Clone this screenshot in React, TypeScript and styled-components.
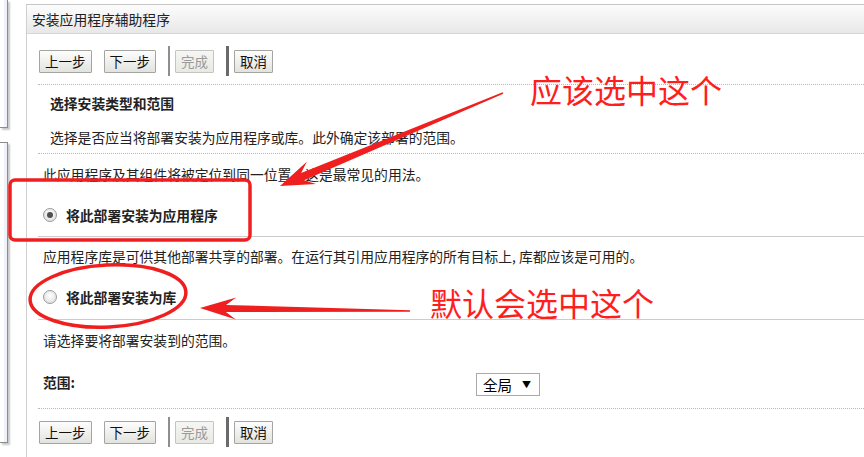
import React from 'react';
import styled, { createGlobalStyle } from 'styled-components';

const GlobalStyle = createGlobalStyle`
  html, body {
    margin: 0;
    padding: 0;
    background: #fff;
  }
  body {
    font-family: "Noto Sans CJK SC", "Noto Sans", sans-serif;
    font-size: 13.8px;
    color: #222;
    overflow: hidden;
  }
`;

const Page = styled.div`
  position: relative;
  width: 864px;
  height: 457px;
  display: flex;
  overflow: hidden;
`;

const Sidebar = styled.div`
  width: 26px;
  flex: none;
  display: flex;
  flex-direction: column;
  gap: 14px;
`;

const SidePanel = styled.div<{ $h: number; $first?: boolean }>`
  width: 7px;
  height: ${(p) => p.$h}px;
  background: #fff;
  border: 1px solid #8c8c8c;
  border-left: none;
  border-top: ${(p) => (p.$first ? 'none' : '1px solid #8c8c8c')};
  box-shadow: 2px 2px 2px rgba(0, 0, 0, 0.22), inset -3px 0 0 #eef2f8;
`;

const Main = styled.div`
  flex: 1;
  min-width: 0;
  margin-top: 4px;
  border-top: 1px solid #c6c6c6;
  border-left: 1px solid #cfcfcf;
`;

const Header = styled.div`
  height: 28px;
  display: flex;
  align-items: center;
  padding-left: 5px;
  background: linear-gradient(#fcfcfc, #e8e8e8);
  border-bottom: 1px solid #d6d6d6;
  color: #222;
`;

const Body = styled.div`
  padding-left: 11px;
`;

const Toolbar = styled.div<{ $top: number; $bottom: number }>`
  display: flex;
  align-items: center;
  gap: 12px;
  height: 30px;
  padding: ${(p) => p.$top}px 0 ${(p) => p.$bottom}px 1px;
`;

const Button = styled.button`
  height: 23px;
  padding: 0 5px;
  font-family: inherit;
  font-size: 13.5px;
  color: #111;
  background: linear-gradient(#fdfdfd, #e2e2de);
  border: 1px solid #a4a4a0;
  border-radius: 1px;
  line-height: 21px;
  &:disabled {
    color: #9a9a9a;
    border-color: #c4c4c0;
    background: linear-gradient(#f6f6f4, #e8e8e4);
  }
`;

const Separator = styled.div<{ $w: number; $c: string }>`
  width: ${(p) => p.$w}px;
  height: 30px;
  background: ${(p) => p.$c};
  margin-right: -7px;
`;

const Rule = styled.div<{ $dotted?: boolean }>`
  border-top: 1px ${(p) => (p.$dotted ? 'dotted #b8b8b8' : 'solid #cccccc')};
`;

const Row = styled.div<{ $h: number; $indent: number; $bold?: boolean }>`
  height: ${(p) => p.$h}px;
  display: flex;
  align-items: center;
  padding-left: ${(p) => p.$indent}px;
  font-weight: ${(p) => (p.$bold ? 700 : 400)};
  white-space: nowrap;
`;

const Radio = styled.span<{ $checked?: boolean }>`
  width: 12px;
  height: 12px;
  border-radius: 50%;
  border: 1px solid #9c9c9c;
  background: radial-gradient(circle at 50% 40%, #ffffff, #d8d8d8);
  display: flex;
  align-items: center;
  justify-content: center;
  margin-right: 9px;
  &::after {
    content: '';
    width: 6px;
    height: 6px;
    border-radius: 50%;
    background: ${(p) => (p.$checked ? '#505050' : 'transparent')};
  }
`;

const OptionLabel = styled.span`
  font-weight: 700;
`;

const ScopeRow = styled.div`
  height: 48px;
  display: grid;
  grid-template-columns: 433px auto;
  align-items: center;
  padding-left: 5px;
`;

const ScopeLabel = styled.span`
  font-weight: 700;
  margin-top: -5px;
`;

const Select = styled.div`
  box-sizing: content-box;
  width: 56px;
  height: 21px;
  border: 1px solid #aaaaaa;
  display: flex;
  align-items: center;
  gap: 10px;
  padding-left: 6px;
  font-size: 14.5px;
  color: #000;
`;

const Caret = styled.span`
  font-size: 9px;
`;

const Overlay = styled.svg`
  position: absolute;
  left: 0;
  top: 0;
  pointer-events: none;
`;

const Note = styled.div<{ $x: number; $y: number }>`
  position: absolute;
  left: ${(p) => p.$x}px;
  top: ${(p) => p.$y}px;
  font-size: 32px;
  line-height: 1;
  color: #ff1e1e;
  white-space: nowrap;
`;

const RED = '#f01f1f';

function arrowPoints(
  tx: number,
  ty: number,
  hx: number,
  hy: number,
  headLen: number,
  headW: number,
  shaftW: number
) {
  const dx = hx - tx;
  const dy = hy - ty;
  const len = Math.hypot(dx, dy);
  const ux = dx / len;
  const uy = dy / len;
  const nx = -uy;
  const ny = ux;
  const neckX = hx - ux * headLen * 0.72;
  const neckY = hy - uy * headLen * 0.72;
  const wingX = hx - ux * headLen;
  const wingY = hy - uy * headLen;
  const pts: [number, number][] = [
    [tx + nx * 0.8, ty + ny * 0.8],
    [neckX + nx * shaftW, neckY + ny * shaftW],
    [wingX + nx * headW, wingY + ny * headW],
    [hx, hy],
    [wingX - nx * headW, wingY - ny * headW],
    [neckX - nx * shaftW, neckY - ny * shaftW],
    [tx - nx * 0.8, ty - ny * 0.8],
  ];
  return pts.map(([x, y]) => `${x.toFixed(1)},${y.toFixed(1)}`).join(' ');
}

const WizardButtons = ({ top, bottom }: { top: number; bottom: number }) => (
  <Toolbar $top={top} $bottom={bottom}>
    <Button>上一步</Button>
    <Button>下一步</Button>
    <Separator $w={2} $c="#8e8e8e" />
    <Button disabled>完成</Button>
    <Separator $w={3} $c="#6a6a6a" />
    <Button>取消</Button>
  </Toolbar>
);

export default function App() {
  return (
    <>
      <GlobalStyle />
      <Page>
        <Sidebar>
          <SidePanel $first $h={127} />
          <SidePanel $h={299} />
        </Sidebar>
        <Main>
          <Header>安装应用程序辅助程序</Header>
          <Body>
            <WizardButtons top={12} bottom={8} />
            <Rule $dotted />
            <Row $h={36} $indent={12} $bold>
              选择安装类型和范围
            </Row>
            <Row $h={32} $indent={12}>
              选择是否应当将部署安装为应用程序或库。此外确定该部署的范围。
            </Row>
            <Rule $dotted />
            <Row $h={40} $indent={5}>
              此应用程序及其组件将被定位到同一位置。这是最常见的用法。
            </Row>
            <Row $h={42} $indent={5}>
              <Radio $checked />
              <OptionLabel>将此部署安装为应用程序</OptionLabel>
            </Row>
            <Rule />
            <Row $h={38} $indent={5}>
              应用程序库是可供其他部署共享的部署。在运行其引用应用程序的所有目标上, 库都应该是可用的。
            </Row>
            <Row $h={44} $indent={5}>
              <Radio />
              <OptionLabel>将此部署安装为库</OptionLabel>
            </Row>
            <Rule />
            <Row $h={40} $indent={5}>
              请选择要将部署安装到的范围。
            </Row>
            <ScopeRow>
              <ScopeLabel>范围:</ScopeLabel>
              <Select>
                全局 <Caret>▼</Caret>
              </Select>
            </ScopeRow>
            <Rule $dotted />
            <WizardButtons top={8} bottom={0} />
          </Body>
        </Main>

        <Overlay width={864} height={457} viewBox="0 0 864 457">
          <rect x={10} y={180} width={240} height={60} rx={5} fill="none" stroke={RED} strokeWidth={3.5} />
          <ellipse cx={108} cy={296} rx={78} ry={31} fill="none" stroke={RED} strokeWidth={3.5} transform="rotate(-3 108 296)" />
          <polygon points={arrowPoints(503, 93, 280, 186, 34, 12, 4)} fill={RED} />
          <polygon points={arrowPoints(410, 311, 200, 308, 36, 11, 3.5)} fill={RED} />
        </Overlay>
        <Note $x={530} $y={73}>应该选中这个</Note>
        <Note $x={430} $y={286}>默认会选中这个</Note>
      </Page>
    </>
  );
}
